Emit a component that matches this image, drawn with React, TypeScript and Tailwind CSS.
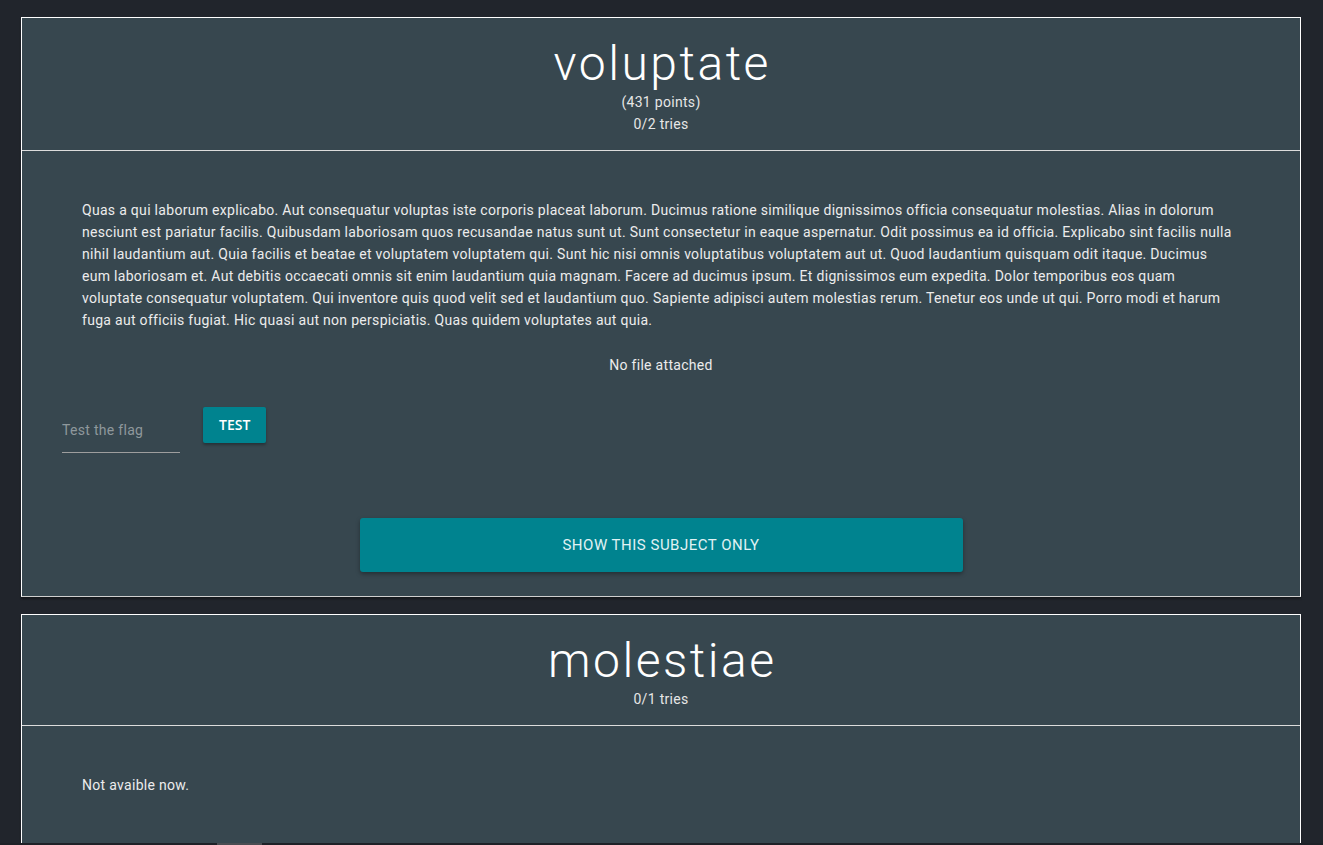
import React from 'react';

type Subject = {
  title: string;
  points?: number;
  tries: string;
  available: boolean;
  description?: string;
};

const subjects: Subject[] = [
  {
    title: 'voluptate',
    points: 431,
    tries: '0/2 tries',
    available: true,
    description:
      'Quas a qui laborum explicabo. Aut consequatur voluptas iste corporis placeat laborum. Ducimus ratione similique dignissimos officia consequatur molestias. Alias in dolorum nesciunt est pariatur facilis. Quibusdam laboriosam quos recusandae natus sunt ut. Sunt consectetur in eaque aspernatur. Odit possimus ea id officia. Explicabo sint facilis nulla nihil laudantium aut. Quia facilis et beatae et voluptatem voluptatem qui. Sunt hic nisi omnis voluptatibus voluptatem aut ut. Quod laudantium quisquam odit itaque. Ducimus eum laboriosam et. Aut debitis occaecati omnis sit enim laudantium quia magnam. Facere ad ducimus ipsum. Et dignissimos eum expedita. Dolor temporibus eos quam voluptate consequatur voluptatem. Qui inventore quis quod velit sed et laudantium quo. Sapiente adipisci autem molestias rerum. Tenetur eos unde ut qui. Porro modi et harum fuga aut officiis fugiat. Hic quasi aut non perspiciatis. Quas quidem voluptates aut quia.',
  },
  {
    title: 'molestiae',
    tries: '0/1 tries',
    available: false,
  },
];

function SubjectCard({ subject }: { subject: Subject }) {
  return (
    <div className="bg-[#37474f] border border-white shadow-[0_2px_2px_rgba(0,0,0,0.35)] border-b-[#cfcfcf]">
      {/* Header */}
      <div className="pt-[19px] pb-[15px] text-center border-b border-[#dcdcdc]">
        <h2 className="text-[48px] leading-[54px] font-light text-white tracking-[2.5px] pl-[2.5px]">{subject.title}</h2>
        {subject.points !== undefined && (
          <div className="text-sm leading-[22px] text-[#e6e6e6] tracking-[0.3px]">({subject.points} points)</div>
        )}
        <div className="text-sm leading-[22px] text-[#e6e6e6] tracking-[0.3px]">{subject.tries}</div>
      </div>

      {/* Body */}
      <div className="pt-12 px-10 pb-6">
        {subject.available ? (
          <>
            <p className="pl-5 pr-[26px] text-sm leading-[22px] text-[#ececec] tracking-[0.3px]">{subject.description}</p>
            <div className="mt-[23px] text-center text-sm leading-[22px] text-[#ececec] tracking-[0.3px]">No file attached</div>
            <div className="mt-[31px] flex items-start gap-[23px]">
              <input
                placeholder="Test the flag"
                className="w-[118px] h-[46px] bg-transparent border-b border-[#9e9e9e] text-sm text-white placeholder:text-[#8f989c] outline-none tracking-[0.3px]"
              />
              <button className="h-9 px-4 bg-[#00838f] rounded-[2px] text-sm font-semibold text-white shadow-[0_2px_3px_rgba(0,0,0,0.3)] [font-family:'Open_Sans',sans-serif]">
                TEST
              </button>
            </div>
            <div className="mt-[65px] flex justify-center">
              <button className="w-[603px] h-[54px] bg-[#00838f] rounded-[3px] text-[15px] tracking-[0.5px] text-[#e0f2f4] uppercase shadow-[0_2px_4px_rgba(0,0,0,0.35)]">
                Show this subject only
              </button>
            </div>
          </>
        ) : (
          <p className="px-5 text-sm leading-[22px] text-[#ececec] tracking-[0.3px] pb-24">Not avaible now.</p>
        )}
      </div>
    </div>
  );
}

export default function App() {
  return (
    <div className="min-h-screen bg-[#21252c] pt-[17px] pl-[21px] pr-[22px] pb-4 [font-family:Roboto,'Noto_Sans',sans-serif]">
      <div className="flex flex-col gap-[17px]">
        {subjects.map((s) => (
          <SubjectCard key={s.title} subject={s} />
        ))}
      </div>
      {/* bottom scroll strip */}
      <div className="fixed bottom-0 left-0 right-0 h-[2px] bg-[#1e2127]">
        <div className="ml-[217px] w-[45px] h-full bg-[#4a4d52]" />
      </div>
    </div>
  );
}
